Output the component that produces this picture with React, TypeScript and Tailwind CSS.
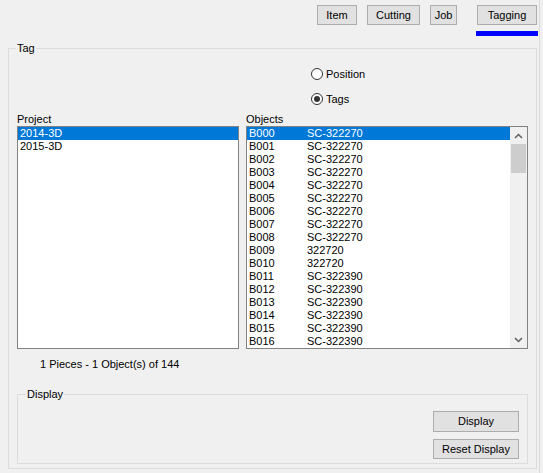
import React from "react";

const objects: [string, string][] = [
  ["B000", "SC-322270"],
  ["B001", "SC-322270"],
  ["B002", "SC-322270"],
  ["B003", "SC-322270"],
  ["B004", "SC-322270"],
  ["B005", "SC-322270"],
  ["B006", "SC-322270"],
  ["B007", "SC-322270"],
  ["B008", "SC-322270"],
  ["B009", "322720"],
  ["B010", "322720"],
  ["B011", "SC-322390"],
  ["B012", "SC-322390"],
  ["B013", "SC-322390"],
  ["B014", "SC-322390"],
  ["B015", "SC-322390"],
  ["B016", "SC-322390"],
];

function Btn({ label, w, h = "h-[20px]" }: { label: string; w: string; h?: string }) {
  return (
    <div
      className={`${w} ${h} flex items-center justify-center border border-[#adadad] bg-[#e1e1e1] text-[11px] leading-[13px] text-black`}
    >
      {label}
    </div>
  );
}

function Radio({ label, checked }: { label: string; checked?: boolean }) {
  return (
    <div className="flex h-[12px] items-center">
      <div className="flex h-[12px] w-[12px] items-center justify-center rounded-full border border-[#333333] bg-white">
        {checked && <div className="h-[6px] w-[6px] rounded-full bg-[#333333]" />}
      </div>
      <span className="ml-[3px] text-[11px] leading-[13px] text-black">{label}</span>
    </div>
  );
}

export default function App() {
  return (
    <div
      className="h-[473px] w-[543px] overflow-hidden bg-[#f0f0f0] text-black"
      style={{ fontFamily: '"Liberation Sans", Arial, sans-serif' }}
    >
      <div className="h-[473px] w-[540px] border-r border-[#dadada]">
        {/* top bar */}
        <div className="flex h-[48px] items-start justify-end pr-[2px] pt-[5px]">
          <Btn label="Item" w="w-[40px]" h="h-[20px]" />
          <div className="ml-[10px]">
            <Btn label="Cutting" w="w-[53px]" />
          </div>
          <div className="ml-[10px]">
            <Btn label="Job" w="w-[27px]" />
          </div>
          <div className="ml-[20px] flex flex-col">
            <Btn label="Tagging" w="w-[60px]" />
            <div className="-mx-[1px] mt-[6px] h-[5px] w-[62px] bg-[#0000ff]" />
          </div>
        </div>

        {/* Tag group */}
        <div className="relative ml-[8px] h-[421px] w-[529px] border border-[#dcdcdc]">
          <div className="absolute -top-[7px] left-[7px] bg-[#f0f0f0] px-[1px] text-[11px] leading-[13px]">
            Tag
          </div>

          <div className="ml-[302px] mt-[19px] flex flex-col gap-[13px]">
            <Radio label="Position" />
            <Radio label="Tags" checked />
          </div>

          <div className="ml-[8px] mt-[8px] flex gap-[7px]">
            <div className="flex flex-col">
              <div className="h-[13px] text-[11px] leading-[13px]">Project</div>
              <div className="h-[223px] w-[222px] border border-[#828282] bg-white">
                <div className="flex h-[13px] items-center bg-[#0078d7] pl-[2px] text-[11px] leading-[13px] text-white">
                  2014-3D
                </div>
                <div className="flex h-[13px] items-center pl-[2px] text-[11px] leading-[13px]">
                  2015-3D
                </div>
              </div>
            </div>
            <div className="flex flex-col">
              <div className="h-[13px] text-[11px] leading-[13px]">Objects</div>
              <div className="flex h-[223px] w-[282px] border border-[#828282] bg-white">
                <div className="flex-1 overflow-hidden">
                  {objects.map(([a, b], i) => (
                    <div
                      key={a}
                      className={`flex h-[13px] items-center pl-[2px] text-[11px] leading-[13px] ${
                        i === 0 ? "bg-[#0078d7] text-white" : ""
                      }`}
                    >
                      <span className="w-[58px]">{a}</span>
                      <span>{b}</span>
                    </div>
                  ))}
                </div>
                <div className="flex w-[17px] flex-col bg-[#f0f0f0]">
                  <div className="flex h-[17px] items-center justify-center">
                    <svg width="9" height="6" viewBox="0 0 9 6">
                      <path d="M1 5 L4.5 1.5 L8 5" fill="none" stroke="#606060" strokeWidth="1.5" />
                    </svg>
                  </div>
                  <div className="mx-[1px] h-[29px] bg-[#cdcdcd]" />
                  <div className="flex-1" />
                  <div className="flex h-[17px] items-center justify-center">
                    <svg width="9" height="6" viewBox="0 0 9 6">
                      <path d="M1 1 L4.5 4.5 L8 1" fill="none" stroke="#606060" strokeWidth="1.5" />
                    </svg>
                  </div>
                </div>
              </div>
            </div>
          </div>

          <div className="ml-[31px] mt-[9px] h-[13px] text-[11px] leading-[13px]">
            1 Pieces - 1 Object(s) of 144
          </div>

          {/* Display group */}
          <div className="relative ml-[8px] mt-[23px] h-[70px] w-[511px] border border-[#dcdcdc]">
            <div className="absolute -top-[7px] left-[8px] bg-[#f0f0f0] px-[1px] text-[11px] leading-[13px]">
              Display
            </div>
            <div className="flex flex-col items-end gap-[7px] pr-[8px] pt-[16px]">
              <Btn label="Display" w="w-[86px]" h="h-[21px]" />
              <Btn label="Reset Display" w="w-[86px]" h="h-[20px]" />
            </div>
          </div>
        </div>
      </div>
    </div>
  );
}
